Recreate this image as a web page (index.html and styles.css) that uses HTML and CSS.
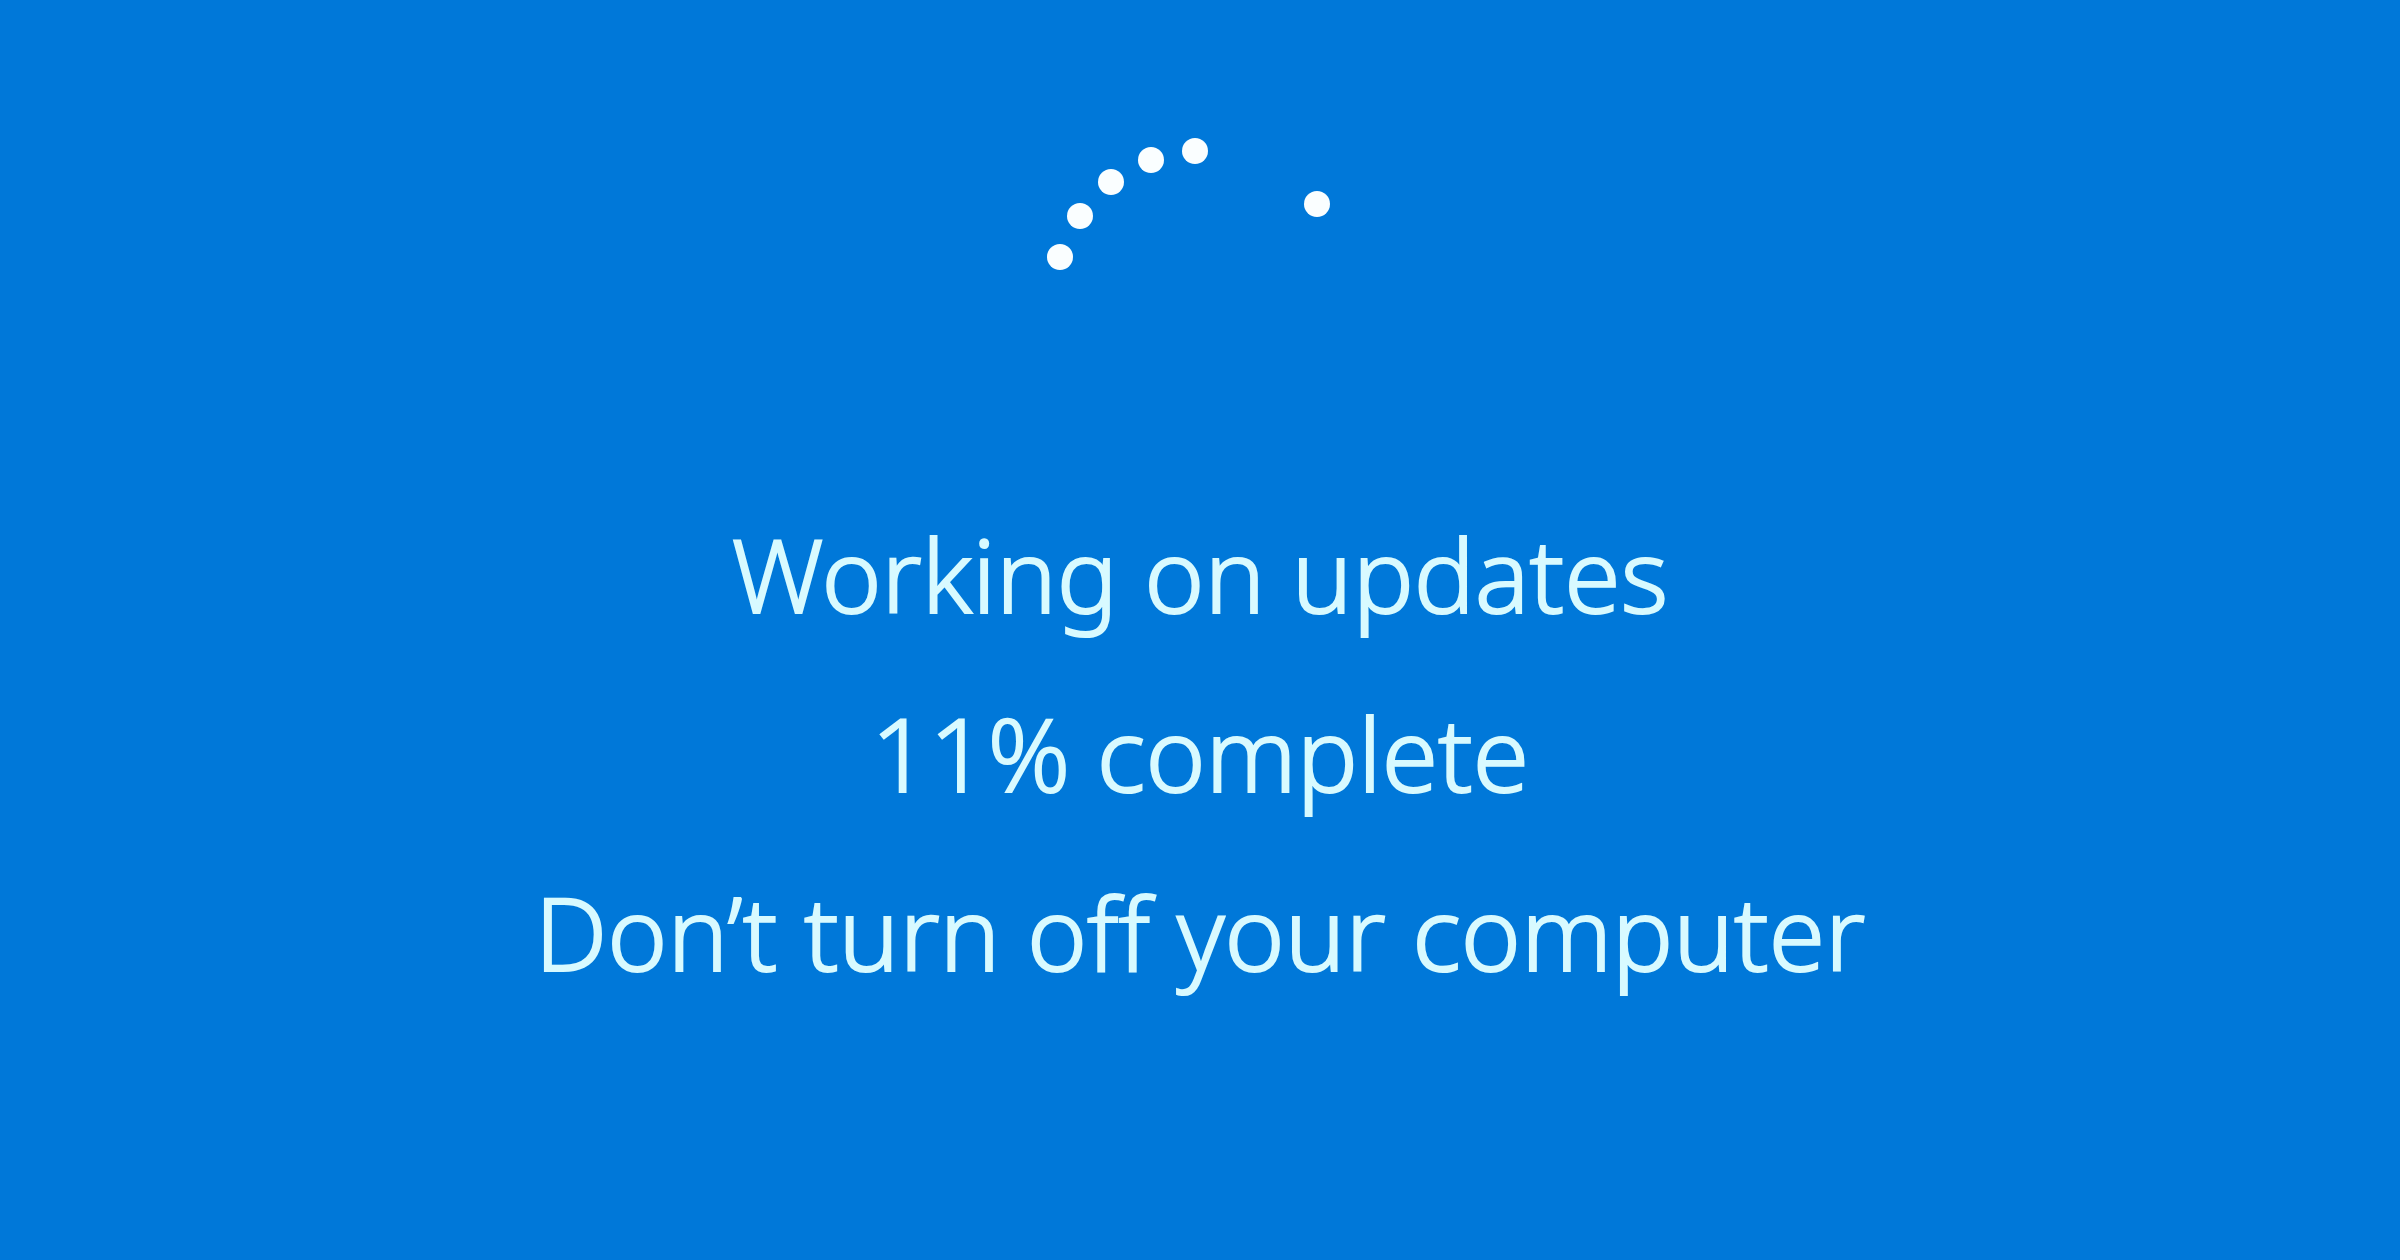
FILE: index.html
```html
<!DOCTYPE html>
<html lang="en">

<head>
    <meta charset="UTF-8">
    <meta name="viewport" content="width=device-width, initial-scale=1.0">
    <title>Working on updates</title>
    <link rel="stylesheet" href="styles.css">
</head>

<body>
    <main class="update-screen">
        <!-- Loading dots -->
        <svg class="spinner" viewBox="0 0 300 300" aria-hidden="true">
            <circle cx="10" cy="121" r="13" />
            <circle cx="30" cy="80" r="13" />
            <circle cx="61" cy="46" r="13" />
            <circle cx="101" cy="24" r="13" />
            <circle cx="145" cy="15" r="13" />
            <circle cx="267" cy="68" r="13" />
        </svg>

        <div class="message" role="status">
            <p>Working on updates</p>
            <p>11% complete</p>
            <p>Don’t turn off your computer</p>
        </div>
    </main>
</body>

</html>
```

FILE: styles.css
```css
body {
    margin: 0;
    background-color: #0078d9;
    color: #d8faff;
    font-family: "Noto Sans", "Open Sans", sans-serif;
    font-weight: 300;
}

.update-screen {
    display: flex;
    flex-direction: column;
    align-items: center;
    padding-top: 136px;
}

.spinner {
    width: 300px;
    height: 300px;
    overflow: visible;
    fill: #fafeff;
}

.message {
    margin-top: 48px;
    text-align: center;
    font-size: 102px;
    line-height: 179px;
    font-variant-ligatures: none;
    /* Light is a little too thin at this size */
    -webkit-text-stroke: 2px #d8faff;
}

.message p {
    margin: 0;
}
```
